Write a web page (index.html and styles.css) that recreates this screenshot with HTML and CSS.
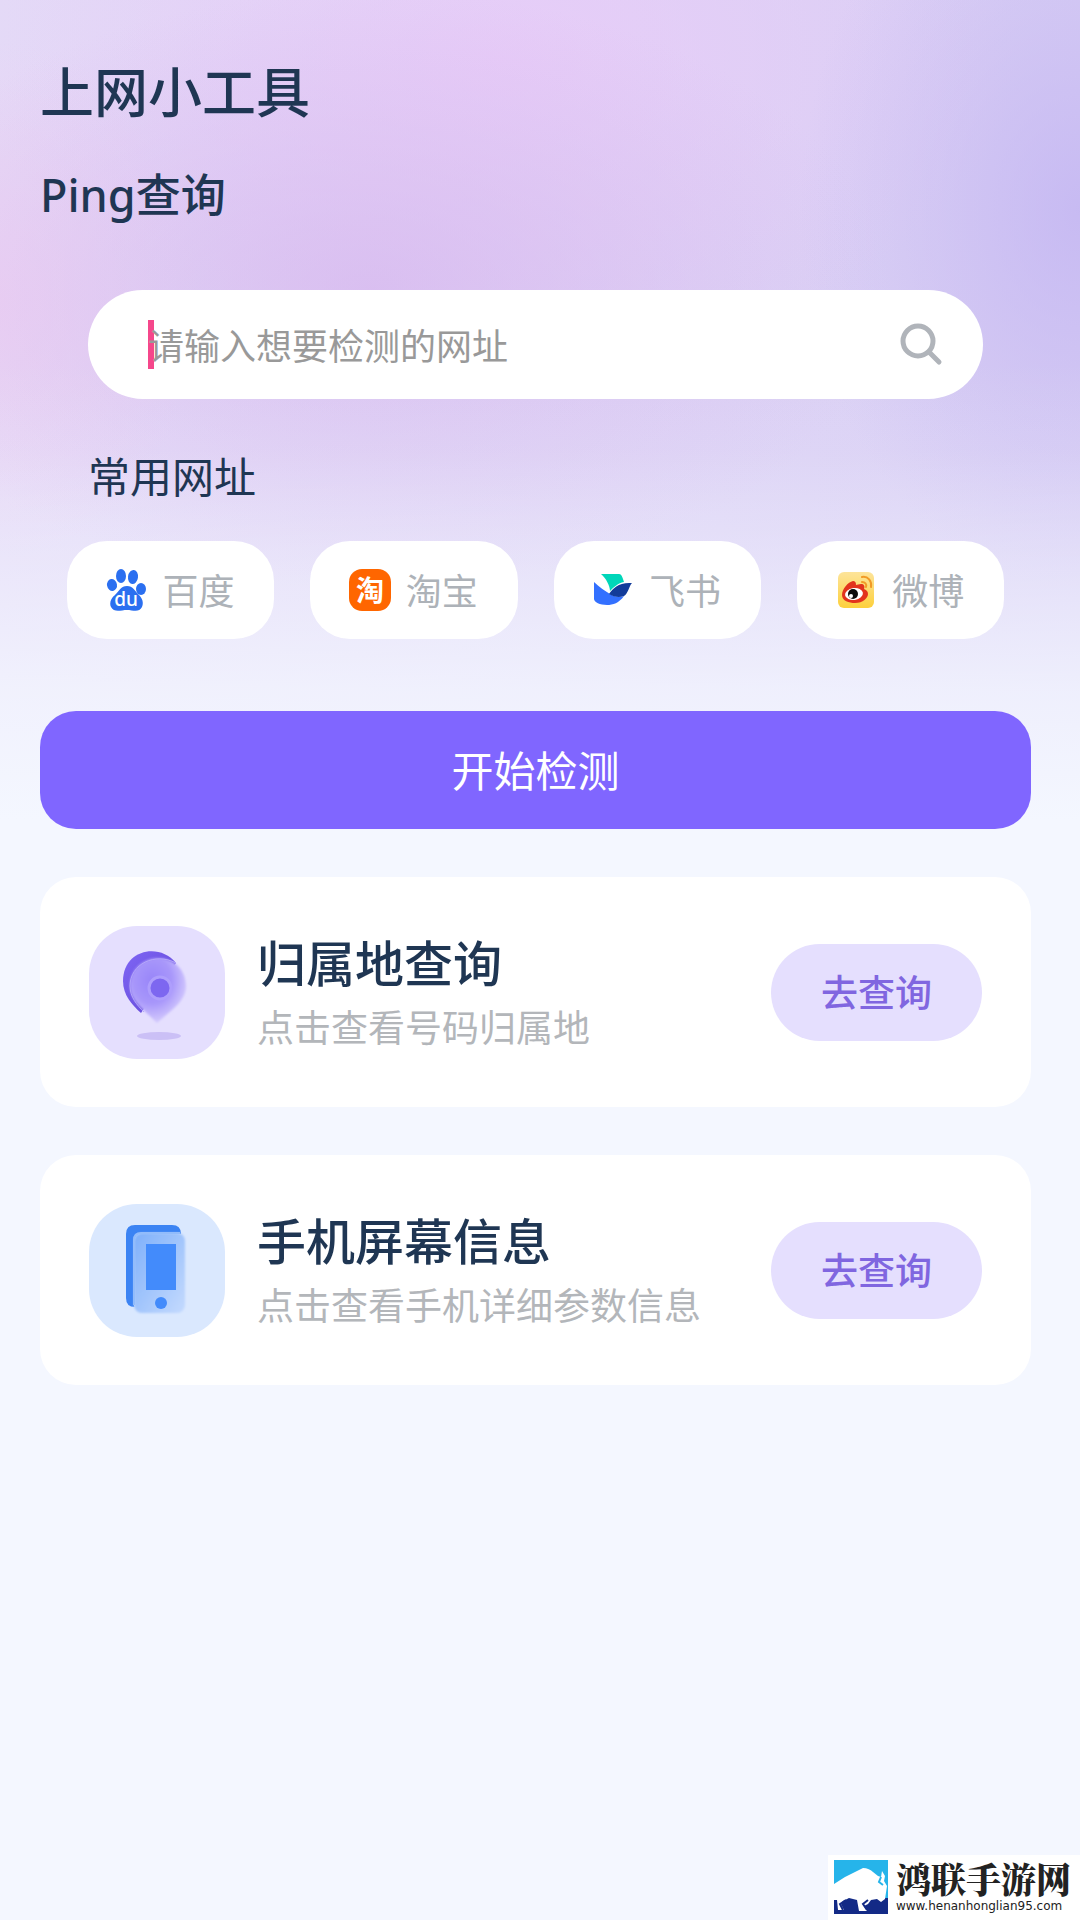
FILE: index.html
```html
<!DOCTYPE html>
<html lang="zh-CN">
<head>
    <meta charset="UTF-8">
    <meta name="viewport" content="width=device-width, initial-scale=1.0">
    <title>上网小工具</title>
    <link rel="stylesheet" href="styles.css">
</head>
<body>
    <main class="container">
        <h1 class="title">上网小工具</h1>
        <h2 class="subtitle">Ping查询</h2>

        <form class="search-box">
            <span class="search-cursor"></span>
            <input type="text" class="search-input" placeholder="请输入想要检测的网址" aria-label="网址">
            <button type="button" class="search-btn" aria-label="搜索">
                <svg width="44" height="44" viewBox="0 0 44 44" fill="none" stroke="#b0b4ba" stroke-width="5">
                    <circle cx="19" cy="18" r="15"/>
                    <path d="M30 29l10 10" stroke-linecap="round"/>
                </svg>
            </button>
        </form>

        <h3 class="sites-title">常用网址</h3>
        <div class="sites">
            <button type="button" class="site-item">
                <svg class="site-icon" viewBox="0 0 44 44">
                    <g fill="#2b6ff0">
                        <ellipse cx="7" cy="17" rx="5" ry="6" transform="rotate(-10 7 17)"/>
                        <ellipse cx="16" cy="8" rx="5" ry="7"/>
                        <ellipse cx="28" cy="9" rx="5" ry="7" transform="rotate(8 28 9)"/>
                        <ellipse cx="36" cy="21" rx="5" ry="6"/>
                        <path d="M22 18c-6 0-8 5-12 9-4 3-6 8-4 12 3 6 10 3 16 3s12 3 15-3c2-5 0-9-3-12-4-4-6-9-12-9z"/>
                    </g>
                    <text class="icon-du" x="21" y="38" text-anchor="middle">du</text>
                </svg>
                <span>百度</span>
            </button>
            <button type="button" class="site-item">
                <svg class="site-icon" viewBox="0 0 44 44">
                    <rect x="1" y="1" width="42" height="42" rx="13" fill="#ff6600"/>
                    <text class="icon-tao" x="22" y="33" text-anchor="middle">淘</text>
                </svg>
                <span>淘宝</span>
            </button>
            <button type="button" class="site-item">
                <svg class="site-icon" viewBox="0 0 44 44">
                    <path d="M10 6h18c3 0 4 5 5 8-6 1-10 5-14 9 0-5-4-13-9-17z" fill="#00d6b9"/>
                    <path d="M3 14c5 5 11 9 16 12s10 4 14 2c-5 7-11 9-17 9-7 0-13-3-13-6z" fill="#3370ff"/>
                    <path d="M18 26c4-6 10-12 23-11-3 3-4 11-8 13-5 2-10 1-15-2z" fill="#133c9a"/>
                </svg>
                <span>飞书</span>
            </button>
            <button type="button" class="site-item">
                <svg class="site-icon" viewBox="0 0 44 44">
                    <defs>
                        <linearGradient id="weiboBg" x1="0" y1="0" x2="0" y2="1">
                            <stop offset="0" stop-color="#fde49a"/>
                            <stop offset="1" stop-color="#fdd03c"/>
                        </linearGradient>
                    </defs>
                    <rect x="4" y="4" width="36" height="36" rx="6" fill="url(#weiboBg)"/>
                    <path d="M19 13c-5 1-11 8-11 14 0 6 7 8 13 8 8 0 13-5 13-9 0-3-2-4-4-5 1-3 0-5-3-5-2 0-4 1-5 1 0-3-1-4-3-4z" fill="#e2331d"/>
                    <ellipse cx="20" cy="26" rx="9" ry="6" fill="#fff" transform="rotate(-8 20 26)"/>
                    <circle cx="19" cy="26" r="5" fill="#0b0b0b"/>
                    <circle cx="17" cy="28" r="2" fill="#fff"/>
                    <path d="M28 9c6-1 10 4 9 10M28 14c3 0 5 2 4 5" fill="none" stroke="#f19a26" stroke-width="2" stroke-linecap="round"/>
                </svg>
                <span>微博</span>
            </button>
        </div>

        <button type="button" class="btn-start">开始检测</button>

        <section class="card">
            <svg class="card-icon" viewBox="0 0 136 133">
                <defs>
                    <linearGradient id="pinBack" x1="0" y1="0" x2="1" y2="1">
                        <stop offset="0" stop-color="#7f66f5"/>
                        <stop offset="1" stop-color="#6045d4"/>
                    </linearGradient>
                    <radialGradient id="pinFront" cx="0.4" cy="0.35" r="0.7">
                        <stop offset="0" stop-color="#9885f9"/>
                        <stop offset="0.5" stop-color="#a897fa"/>
                        <stop offset="1" stop-color="#dcd4fe"/>
                    </radialGradient>
                    <filter id="pinBlur" x="-20%" y="-20%" width="140%" height="140%">
                        <feGaussianBlur stdDeviation="1"/>
                    </filter>
                </defs>
                <rect width="136" height="133" rx="48" fill="#e5dffe"/>
                <path d="M87 37C70 16 34 24 34 55c0 14 9 24 18 32z" fill="url(#pinBack)"/>
                <path d="M69 32c-16 0-28 12-28 28 0 16 16 25 27 37 13-12 29-21 29-37 0-16-12-28-28-28z" fill="url(#pinFront)" filter="url(#pinBlur)"/>
                <path d="M87 37c-21-11-46 1-46 23 0 11 7 19 14 26" fill="none" stroke="#b5a7fb" stroke-width="1"/>
                <circle cx="71" cy="62" r="11" fill="#7d67f0" stroke="#ae9efc" stroke-width="3"/>
                <ellipse cx="70" cy="110" rx="22" ry="4" fill="#cbc0f6"/>
            </svg>
            <div class="card-info">
                <h3 class="card-title">归属地查询</h3>
                <p class="card-desc">点击查看号码归属地</p>
            </div>
            <button type="button" class="btn-go">去查询</button>
        </section>

        <section class="card">
            <svg class="card-icon" viewBox="0 0 136 133">
                <defs>
                    <linearGradient id="phoneFront" x1="0" y1="0" x2="1" y2="1">
                        <stop offset="0" stop-color="#7fb0fa"/>
                        <stop offset="1" stop-color="#c4dafe"/>
                    </linearGradient>
                    <filter id="phoneBlur" x="-20%" y="-20%" width="140%" height="140%">
                        <feGaussianBlur stdDeviation="1"/>
                    </filter>
                </defs>
                <rect width="136" height="133" rx="48" fill="#dae8fe"/>
                <path d="M46 21h37q9 0 9 9v73H46q-9 0-9-9V30q0-9 9-9z" fill="#3b83f3"/>
                <rect x="45" y="29" width="51" height="80" rx="8" fill="#dae8fe"/>
                <rect x="45" y="29" width="51" height="80" rx="8" fill="url(#phoneFront)" filter="url(#phoneBlur)"/>
                <path d="M45 101V36q0-7 7-7h39" fill="none" stroke="#92bcfb" stroke-width="2"/>
                <rect x="57" y="40" width="30" height="46" fill="#438bfb"/>
                <circle cx="72" cy="99" r="6" fill="#438bfb"/>
            </svg>
            <div class="card-info">
                <h3 class="card-title">手机屏幕信息</h3>
                <p class="card-desc">点击查看手机详细参数信息</p>
            </div>
            <button type="button" class="btn-go">去查询</button>
        </section>
    </main>

    <footer class="brand">
        <svg width="54" height="54" viewBox="0 0 54 54">
            <rect width="54" height="54" fill="#26b4ea"/>
            <path d="M0 38h54v16H0z" fill="#132a86"/>
            <path d="M0 24l11-7 18-9c4 0 8 2 10 4l5 4 3 1 1-6 3 5-1 5 3 5-2 13-4 3-4-3-6 1-3 4-4 2 3 5h-8l-2-11-8-2-6 3-2 3 3 6H4l-1-10H0z" fill="#fff"/>
            <path d="M12 40l-6 4 3 6M34 40l-5 4 4 6" fill="none" stroke="#132a86" stroke-width="2"/>
            <path d="M47 17l-2 5 4 3" fill="none" stroke="#26b4ea" stroke-width="2"/>
        </svg>
        <div class="brand-text">
            <span class="brand-name">鸿联手游网</span>
            <a class="brand-url" href="#">www.henanhonglian95.com</a>
        </div>
    </footer>
</body>
</html>
```

FILE: styles.css
```css
* {
    box-sizing: border-box;
}
body {
    margin: 0;
    min-height: 100vh;
    display: flex;
    flex-direction: column;
    font-family: "Noto Sans CJK SC", sans-serif;
    color: #1f3653;
    background-color: #f4f7ff;
    background-image:
        linear-gradient(180deg, rgba(244,247,255,0) 360px, rgba(244,247,255,0.1) 450px, rgba(244,247,255,0.45) 570px, rgba(244,247,255,0.8) 690px, #f4f7ff 820px),
        radial-gradient(ellipse 280px 380px at 1080px 210px, rgba(194,180,242,0.75), rgba(194,180,242,0.35) 50%, rgba(194,180,242,0)),
        radial-gradient(ellipse 520px 300px at 370px 290px, rgba(214,182,238,0.7), rgba(214,182,238,0.35) 50%, rgba(214,182,238,0)),
        radial-gradient(ellipse 520px 300px at 500px 60px, rgba(232,203,248,0.9), rgba(232,203,248,0)),
        radial-gradient(ellipse 200px 260px at 0 300px, rgba(238,208,242,0.8), rgba(238,208,242,0)),
        linear-gradient(90deg, #e4daf7, #d8cef4);
}
h1, h2, h3, p {
    margin: 0;
}
button, input {
    border: none;
    padding: 0;
    font-family: inherit;
}
button {
    cursor: pointer;
}
.container {
    padding: 50px 49px 0 40px;
}
.title {
    font-size: 54px;
    font-weight: 500;
    line-height: 80px;
}
.subtitle {
    margin-top: 31px;
    font-family: "Noto Sans", "Noto Sans CJK SC", sans-serif;
    font-size: 45px;
    font-weight: 500;
    line-height: 68px;
}
.search-box {
    position: relative;
    display: flex;
    align-items: center;
    height: 109px;
    margin: 61px 48px 0;
    padding: 0 40px 0 60px;
    border-radius: 55px;
    background: #fff;
}
.search-cursor {
    position: absolute;
    left: 60px;
    top: 30px;
    width: 6px;
    height: 49px;
    background: #f5478b;
}
.search-input {
    position: relative;
    flex: 1;
    min-width: 0;
    height: 60px;
    padding-bottom: 2px;
    background: transparent;
    color: #1f3653;
    font-size: 36px;
    outline: none;
}
.search-input::placeholder {
    color: #999;
}
.search-btn {
    height: 44px;
    background: transparent;
}
.search-btn svg, .site-icon, .card-icon {
    display: block;
}
.sites-title {
    margin: 46px 48px 0;
    font-size: 42px;
    font-weight: 400;
    line-height: 60px;
}
.sites {
    display: grid;
    grid-template-columns: repeat(4, 1fr);
    gap: 36px;
    margin: 36px 27px 0;
}
.site-item {
    display: flex;
    align-items: center;
    justify-content: center;
    gap: 14px;
    height: 98px;
    padding-right: 2px;
    border-radius: 40px;
    background: #fff;
    color: #adb2b8;
    font-size: 36px;
}
.site-item span {
    padding-bottom: 3px;
}
.site-icon {
    width: 44px;
    height: 44px;
}
.icon-du {
    font-family: "Noto Sans", sans-serif;
    font-size: 19px;
    font-weight: 500;
    fill: #fff;
}
.icon-tao {
    font-size: 28px;
    font-weight: 700;
    fill: #fff;
}
.btn-start {
    display: block;
    width: 100%;
    height: 118px;
    margin-top: 72px;
    padding-bottom: 3px;
    border-radius: 36px;
    background: #8066ff;
    color: #fff;
    font-size: 42px;
}
.card {
    display: flex;
    align-items: center;
    height: 230px;
    margin-top: 48px;
    padding: 0 49px;
    border-radius: 36px;
    background: #fff;
}
.card-icon {
    width: 136px;
    height: 133px;
}
.card-info {
    flex: 1;
    margin-left: 32px;
    padding-bottom: 3px;
}
.card-title {
    font-size: 49px;
    font-weight: 500;
    line-height: 70px;
}
.card-desc {
    color: #b3b6ba;
    font-size: 37px;
    line-height: 60px;
}
.btn-go {
    width: 211px;
    height: 97px;
    padding-bottom: 3px;
    border-radius: 49px;
    background: #e5dffe;
    color: #8066e0;
    font-size: 37px;
    font-weight: 500;
}
.brand {
    display: flex;
    align-items: center;
    gap: 8px;
    margin-top: auto;
    margin-left: auto;
    padding: 5px 9px 6px 6px;
    background: #fff;
}
.brand-text {
    display: flex;
    flex-direction: column;
}
.brand-name {
    font-family: "Noto Serif CJK SC", "Noto Sans CJK SC", serif;
    font-size: 35px;
    font-weight: 900;
    line-height: 36px;
    color: #222;
}
.brand-url {
    margin-top: 2px;
    font-family: "DejaVu Sans", sans-serif;
    font-size: 12px;
    line-height: 16px;
    color: #222;
    text-decoration: none;
}
```
